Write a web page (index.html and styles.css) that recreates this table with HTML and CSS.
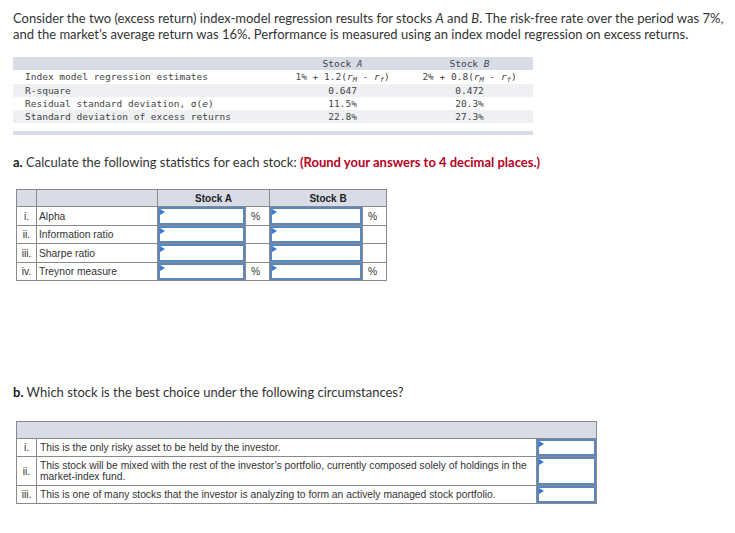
FILE: index.html
```html
<!DOCTYPE html>
<html>
<head>
<meta charset="utf-8">
<link rel="stylesheet" href="styles.css">
</head>
<body>
<div class="page">
  <p class="intro">Consider the two (excess return) index-model regression results for stocks <i>A</i> and <i>B</i>. The risk-free rate over the period was 7%, and the market’s average return was 16%. Performance is measured using an index model regression on excess returns.</p>

  <table class="data">
    <tr class="band">
      <td class="lbl"></td>
      <td class="val">Stock <i>A</i></td>
      <td class="val">Stock <i>B</i></td>
    </tr>
    <tr>
      <td class="lbl">Index model regression estimates</td>
      <td class="val">1% + 1.2(<i>r</i><sub><i>M</i></sub> - <i>r</i><sub><i>f</i></sub>)</td>
      <td class="val">2% + 0.8(<i>r</i><sub><i>M</i></sub> - <i>r</i><sub><i>f</i></sub>)</td>
    </tr>
    <tr class="alt">
      <td class="lbl">R-square</td>
      <td class="val">0.647</td>
      <td class="val">0.472</td>
    </tr>
    <tr>
      <td class="lbl">Residual standard deviation, σ(<i>e</i>)</td>
      <td class="val">11.5%</td>
      <td class="val">20.3%</td>
    </tr>
    <tr class="alt">
      <td class="lbl">Standard deviation of excess returns</td>
      <td class="val">22.8%</td>
      <td class="val">27.3%</td>
    </tr>
    <tr class="gap"><td colspan="3"></td></tr>
    <tr class="foot"><td colspan="3"></td></tr>
  </table>

  <p class="q qa"><b>a.</b> Calculate the following statistics for each stock: <strong class="red">(Round your answers to 4 decimal places.)</strong></p>

  <table class="ans ansa">
    <tr class="head">
      <td class="idx"></td>
      <td class="name"></td>
      <td colspan="2" class="hcol">Stock A</td>
      <td colspan="2" class="hcol">Stock B</td>
    </tr>
    <tr>
      <td class="idx">i.</td>
      <td class="name">Alpha</td>
      <td class="inp ia"><div class="box"></div></td>
      <td class="unit">%</td>
      <td class="inp ib"><div class="box"></div></td>
      <td class="unit">%</td>
    </tr>
    <tr>
      <td class="idx">ii.</td>
      <td class="name">Information ratio</td>
      <td class="inp ia"><div class="box"></div></td>
      <td class="unit"></td>
      <td class="inp ib"><div class="box"></div></td>
      <td class="unit"></td>
    </tr>
    <tr>
      <td class="idx">iii.</td>
      <td class="name">Sharpe ratio</td>
      <td class="inp ia"><div class="box"></div></td>
      <td class="unit"></td>
      <td class="inp ib"><div class="box"></div></td>
      <td class="unit"></td>
    </tr>
    <tr>
      <td class="idx">iv.</td>
      <td class="name">Treynor measure</td>
      <td class="inp ia"><div class="box"></div></td>
      <td class="unit">%</td>
      <td class="inp ib"><div class="box"></div></td>
      <td class="unit">%</td>
    </tr>
  </table>

  <p class="q qb"><b>b.</b> Which stock is the best choice under the following circumstances?</p>

  <table class="ans ansb">
    <tr class="head">
      <td colspan="3"></td>
    </tr>
    <tr class="r1">
      <td class="idx">i.</td>
      <td class="text">This is the only risky asset to be held by the investor.</td>
      <td class="inp ic"><div class="box"></div></td>
    </tr>
    <tr class="r2">
      <td class="idx">ii.</td>
      <td class="text">This stock will be mixed with the rest of the investor’s portfolio, currently composed solely of holdings in the market-index fund.</td>
      <td class="inp ic"><div class="box"></div></td>
    </tr>
    <tr class="r3">
      <td class="idx">iii.</td>
      <td class="text">This is one of many stocks that the investor is analyzing to form an actively managed stock portfolio.</td>
      <td class="inp ic"><div class="box"></div></td>
    </tr>
  </table>
</div>
</body>
</html>
```

FILE: styles.css
```css
html, body {
  margin: 0;
  padding: 0;
  background: #ffffff;
}

.page {
  padding: 10px 13px 0 13px;
  font-family: Lato, "Open Sans", sans-serif;
  color: #333333;
}

.intro {
  margin: 0;
  font-size: 13px;
  line-height: 16px;
  width: 716px;
}

.intro i {
  font-style: italic;
}

/* top data table */
.data {
  margin-top: 15px;
  width: 520px;
  border-collapse: collapse;
  font-family: "DejaVu Sans Mono", monospace;
  font-size: 9.5px;
  color: #444444;
}

.data td {
  padding: 0;
  height: 13.3px;
  line-height: 13px;
  white-space: nowrap;
}

.data .lbl {
  padding-left: 12px;
  width: 250px;
}

.data .val {
  text-align: center;
  width: 125px;
}

.data tr.band td {
  background: #d8dce6;
}

.data tr.alt td {
  background: #eff0f4;
}

.data sub {
  font-size: 7px;
  vertical-align: -2px;
  line-height: 0;
}

.data tr.gap td {
  height: 8px;
}

.data tr.foot td {
  height: 4px;
  background: #d8dce6;
}

/* questions */
.q {
  margin: 0;
  font-size: 13px;
  line-height: 16px;
  color: #333333;
}

.q b {
  font-weight: 700;
  color: #222;
}

.qa {
  margin-top: 19px;
}

.qb {
  margin-top: 103px;
}

.red {
  color: #b8001f;
  font-weight: 700;
}

/* answer tables */
.ans {
  margin-left: 3px;
  border-collapse: collapse;
  font-family: "Liberation Sans", Arial, sans-serif;
  font-size: 10.3px;
  color: #333333;
}

.ans td {
  border: 1px solid #8a8a8a;
  padding: 0;
  height: 17.5px;
}

.ans .head td {
  background: #d8dce6;
  height: 16px;
}

.ans .hcol {
  text-align: center;
  font-weight: 700;
  font-size: 10px;
  color: #222;
}

.ansa {
  margin-top: 19px;
}

.ans .idx {
  width: 19px;
  text-align: center;
}

.ans .name {
  width: 118px;
  padding-left: 2px;
}

.ans .unit {
  width: 24px;
  padding-left: 5px;
  box-sizing: border-box;
}

.ans .ia {
  width: 87px;
}

.ans .ib {
  width: 92px;
}

.ans td.inp {
  position: relative;
  padding: 0;
}

.box {
  position: absolute;
  inset: 0;
  border: 2px solid #5b86c0;
  background: #ffffff;
}

.box::before {
  content: "";
  position: absolute;
  left: 0;
  top: 0;
  border-top: 3px solid transparent;
  border-bottom: 3px solid transparent;
  border-left: 5px solid #3a78d0;
}

/* table b */
.ansb {
  margin-top: 21px;
  width: 581px;
}

.ansb .text {
  padding-left: 3px;
  line-height: 11px;
}

.ansb .ic {
  width: 59px;
}

.ansb .r1 td,
.ansb .r3 td {
  height: 17px;
}

.ansb .r2 td {
  height: 28px;
}
```
